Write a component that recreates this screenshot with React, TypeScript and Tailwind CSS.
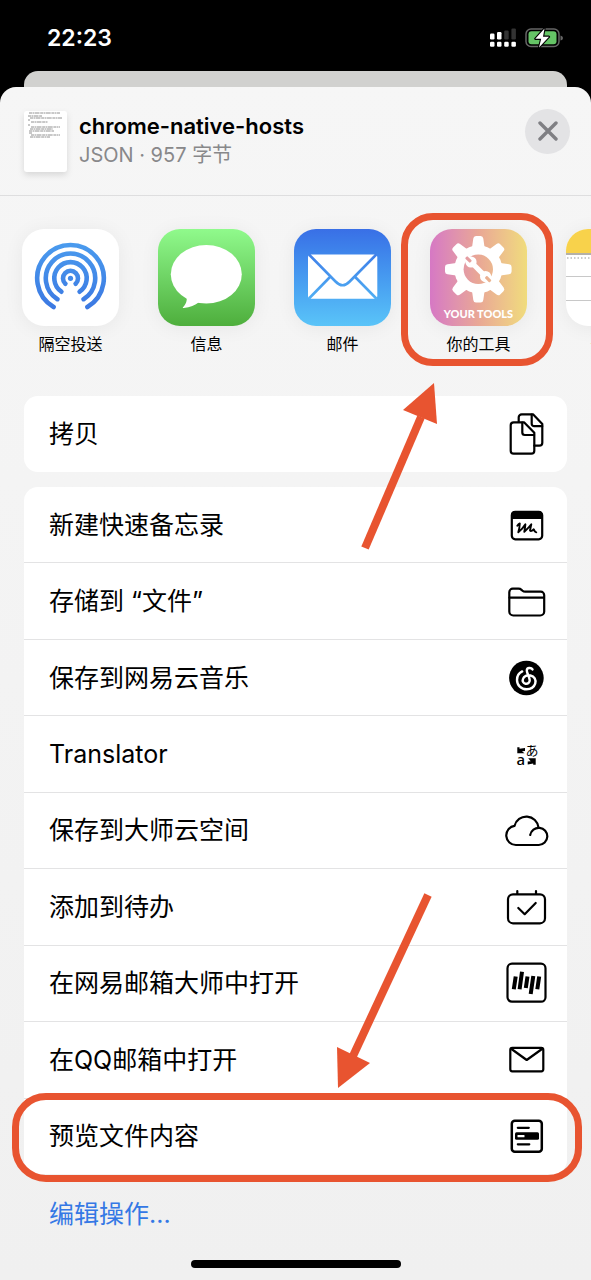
import type { ReactNode } from "react";

const line = {
  fill: "none",
  stroke: "#000",
  strokeWidth: 2.2,
  strokeLinecap: "round" as const,
  strokeLinejoin: "round" as const,
};

function Glyph({ children }: { children: ReactNode }) {
  return (
    <svg viewBox="0 0 48 48" className="size-12 shrink-0" aria-hidden="true">
      {children}
    </svg>
  );
}

const CopyIcon = () => (
  <Glyph>
    <g {...line}>
      <path d="M16.700 12V7.300a3 3 0 0 1 3-3H31l9.300 9.600v18.800a3 3 0 0 1-3 3h-5" />
      <path d="M29.700 4.500v9.200a2.500 2.500 0 0 0 2.500 2.500h8" />
      <path d="M11.700 12.300H22l10.300 10.500v17.900a3 3 0 0 1-3 3H11.700a3 3 0 0 1-3-3V15.300a3 3 0 0 1 3-3z" />
      <path d="M20.300 12.500v10a2.500 2.500 0 0 0 2.500 2.500h9.300" />
    </g>
  </Glyph>
);

const MemoIcon = () => (
  <Glyph>
    <rect x="9.800" y="10.800" width="30.400" height="27.500" rx="3.500" {...line} />
    <path d="M9 18v-4a4 4 0 0 1 4-4h23.500a4 4 0 0 1 4 4v4z" />
    <path
      d="M15.300 24.800Q16.500 23 17.800 22.500Q17.600 27 16.300 31.300Q20.500 28 23.400 23.300Q23 27 22.300 30.800Q26.500 27 29.300 23.300Q28.500 27 28 29.500Q29 31 31.800 28.300Q32.300 30.800 34.300 31.300"
      {...line}
      strokeWidth="1.900"
    />
  </Glyph>
);

const FolderIcon = () => (
  <Glyph>
    <g {...line}>
      <path d="M7.300 34.500V15.200a3.500 3.500 0 0 1 3.500-3.500h5.700c1.400 0 2.200.4 3 1.100l1 .9c.8.7 1.500 1 2.700 1h15.500a3.500 3.500 0 0 1 3.500 3.500v16.300a4 4 0 0 1-4 4H11.300a4 4 0 0 1-4-4z" />
      <path d="M7.500 20.700h34.500" />
    </g>
  </Glyph>
);

const MusicIcon = () => (
  <Glyph>
    <circle cx="24.400" cy="24" r="17.300" />
    <path
      d="M30.500 15.400c-1.200-2-5.700-2-5.700 1 0 2.700 2.900 6.700 2.900 9.800a3.500 3.500 0 1 1-6.700-1.300c.9-2.600 4.200-4.100 7.400-3.400 3.900.8 6 4.400 4.800 8.200-1.200 3.600-4.700 5.600-8.600 5.600-5.400 0-9.600-4.200-9.600-9.400 0-3.900 2.100-7 5.200-8.500"
      fill="none"
      stroke="#fff"
      strokeWidth="2.400"
      strokeLinecap="round"
    />
  </Glyph>
);

const TranslateIcon = () => (
  <Glyph>
    <path d="M15.300 17.300h2.200v1.500l5.500-.8v3l-3 .3 2.500 2h-7.200z" />
    <path d="M33.700 34.800h-2.500v-1.200l-5.500 1v-3l3-.3-2.500-3h7.500z" />
    <text x="14.500" y="35" fontSize="15" className="font-['Noto_Sans'] font-medium">a</text>
    <text x="23.500" y="25" fontSize="13" className="font-['Noto_Sans_CJK_JP']">あ</text>
  </Glyph>
);

const CloudIcon = () => (
  <Glyph>
    <path
      d="M36.500 21.500a12.200 12.200 0 0 0-24-1.600A9.600 9.600 0 0 0 14 39h22.800a8.600 8.600 0 1 0-8.600-10"
      {...line}
    />
  </Glyph>
);

const TodoIcon = () => (
  <Glyph>
    <g {...line}>
      <rect x="6" y="11.300" width="37" height="29" rx="5" />
      <path d="M15.300 8v3M34 8v3M16.300 25l6.400 6.200 11-11.200" />
    </g>
  </Glyph>
);

const MasterMailIcon = () => (
  <Glyph>
    <rect x="5.500" y="4.700" width="38" height="38" rx="4.500" {...line} />
    <path
      d="M13.700 17.500l-1.900 12.700M20 12.700l-2.400 17.500M25.500 17.500l-1.700 11.500M31.300 17l-2.600 18M37.200 17.500l-1.900 12.700"
      {...line}
      strokeWidth="4"
      strokeLinecap="butt"
    />
  </Glyph>
);

const MailIcon = () => (
  <Glyph>
    <g {...line}>
      <rect x="8.300" y="11.800" width="33" height="23.500" rx="2" />
      <path d="M9.500 13l15.200 11L40 13" />
    </g>
  </Glyph>
);

const PreviewIcon = () => (
  <Glyph>
    <rect x="9.800" y="8.800" width="30" height="31" rx="3" {...line} strokeWidth="2.500" />
    <path d="M15.800 15.800h11M15.800 32.300h11.500" {...line} />
    <rect x="13" y="20.300" width="24" height="7.500" rx="1.500" />
    <rect x="15.500" y="23" width="7" height="2.300" rx=".6" fill="#fff" />
  </Glyph>
);

const AirDrop = () => (
  <svg viewBox="0 0 97 97" className="size-full" aria-hidden="true">
    <defs>
      <linearGradient id="air" gradientUnits="userSpaceOnUse" x1="0" y1="14" x2="0" y2="80">
        <stop offset="0" stopColor="#4a9bee" />
        <stop offset="1" stopColor="#3b78e2" />
      </linearGradient>
    </defs>
    <g fill="none" stroke="url(#air)" strokeWidth="4.600" strokeLinecap="round">
      <path d="M31.600 78A33.300 33.300 0 1 1 65.400 78" />
      <path d="M35.400 70.200A24.700 24.700 0 1 1 61.600 70.200" />
      <path d="M39.400 62.700A16.200 16.200 0 1 1 57.600 62.700" />
      <path d="M43.400 54.800A7.500 7.500 0 1 1 53.600 54.800" />
    </g>
    <circle cx="48.500" cy="49.300" r="2.600" fill="#4289e8" />
  </svg>
);

const Messages = () => (
  <svg viewBox="0 0 97 97" className="size-full" aria-hidden="true">
    <g fill="#fff">
      <ellipse cx="48.300" cy="45.200" rx="35.500" ry="29.300" />
      <path d="M28.500 67c1 5-.8 8.500-3.500 11.300-.5.700 0 .9.800.8 6.500-.5 11-2.800 15.500-6z" />
    </g>
  </svg>
);

const Mail = () => (
  <svg viewBox="0 0 97 97" className="size-full" aria-hidden="true">
    <defs>
      <linearGradient id="fold" gradientUnits="userSpaceOnUse" x1="0" y1="25" x2="0" y2="70">
        <stop offset="0" stopColor="#3f7fe9" />
        <stop offset="1" stopColor="#50aff3" />
      </linearGradient>
    </defs>
    <rect x="14" y="25.500" width="69.300" height="44.300" rx="3" fill="#fff" />
    <g fill="none" stroke="url(#fold)" strokeWidth="2.600">
      <path d="M15 25.500L41.500 52.500Q48.600 60 55.700 52.500L82.300 25.500" />
      <path d="M36.500 47.500L15 69.500M60.700 47.500L82.300 69.500" />
    </g>
  </svg>
);

const Tools = () => (
  <span className="relative block size-full">
    <svg viewBox="0 0 97 97" className="size-full" aria-hidden="true">
      <defs>
        <mask id="gear">
          <g fill="#fff">
            <circle cx="48.300" cy="40.300" r="24" />
            {[0, 45, 90, 135, 180, 225, 270, 315].map((a) => (
              <path
                key={a}
                d="M41.800 20L43.300 9.500Q43.600 7 46 7h4.600q2.400 0 2.700 2.500L54.800 20z"
                transform={`rotate(${a} 48.300 40.300)`}
              />
            ))}
          </g>
          <circle cx="48.300" cy="40.300" r="14.700" fill="#000" />
          <g transform="rotate(-45 48.300 40.300)">
            <rect x="45.800" y="31" width="5" height="18.600" fill="#fff" />
            <circle cx="48.300" cy="30" r="5.600" fill="#fff" />
            <circle cx="48.300" cy="50.600" r="5.600" fill="#fff" />
            <rect x="46.700" y="23" width="3.200" height="6.800" rx="1" fill="#000" />
            <rect x="46.700" y="50.800" width="3.200" height="6.800" rx="1" fill="#000" />
          </g>
        </mask>
      </defs>
      <rect width="97" height="97" fill="#fff" mask="url(#gear)" />
    </svg>
    <span className="absolute inset-x-0 bottom-1 text-center font-[Lato] text-[11px] leading-4 font-black whitespace-nowrap text-white">
      YOUR TOOLS
    </span>
  </span>
);

const Notes = () => (
  <svg viewBox="0 0 97 97" className="size-full" aria-hidden="true">
    <rect width="97" height="24" fill="#f8d24b" />
    <rect y="24" width="97" height="2" fill="#b4b1a8" />
    <path d="M1 29H97" stroke="#bbb" strokeWidth="1.500" strokeDasharray="1.500 2" />
    <path d="M0 47.500H97M0 71.500H97" stroke="#c8c8c8" />
  </svg>
);

const apps = [
  { name: "隔空投送", tile: "bg-white", art: <AirDrop /> },
  { name: "信息", tile: "bg-linear-to-b from-[#90fa8c] to-[#4eae3c]", art: <Messages /> },
  { name: "邮件", tile: "bg-linear-to-b from-[#396fe6] to-[#5ac4f8]", art: <Mail /> },
  {
    name: "你的工具",
    tile: "bg-linear-to-r from-[#d678c4] via-[#e9a795] to-[#f0dc7c]",
    art: <Tools />,
    marked: true,
  },
  { name: "备忘录", tile: "bg-white", art: <Notes /> },
];

const actions = [
  { name: "新建快速备忘录", icon: <MemoIcon /> },
  { name: "存储到 “文件”", icon: <FolderIcon /> },
  { name: "保存到网易云音乐", icon: <MusicIcon /> },
  { name: "Translator", icon: <TranslateIcon /> },
  { name: "保存到大师云空间", icon: <CloudIcon /> },
  { name: "添加到待办", icon: <TodoIcon /> },
  { name: "在网易邮箱大师中打开", icon: <MasterMailIcon /> },
  { name: "在QQ邮箱中打开", icon: <MailIcon /> },
  { name: "预览文件内容", icon: <PreviewIcon />, marked: true },
];

function Action({ name, icon }: { name: string; icon: ReactNode }) {
  return (
    <button type="button" className="flex w-full flex-1 items-center justify-between pr-[17px] pl-[25px] text-left">
      <span className="text-[25px] leading-8">{name}</span>
      {icon}
    </button>
  );
}

export default function App() {
  return (
    <div className="flex min-h-screen flex-col overflow-hidden bg-black font-[Inter,'Noto_Sans_CJK_SC',sans-serif] text-black">
      <header className="flex h-[71px] items-center justify-between pt-1 pr-7 pl-[47px] text-white">
        <time className="text-[23px] leading-8 font-semibold">22:23</time>
        <svg viewBox="0 0 73 20" className="h-5 w-[73px]" role="img" aria-label="信号与电池">
          <g fill="#fff">
            <rect x="0" y="5.500" width="4.500" height="6" rx="1.200" />
            <rect x="7" y="4" width="4.500" height="7.500" rx="1.200" />
            <rect x="0" y="13.800" width="4.500" height="5" rx="1.200" />
            <rect x="7" y="13.800" width="4.500" height="5" rx="1.200" />
            <rect x="14.200" y="13.800" width="4.500" height="5" rx="1.200" />
            <rect x="21.400" y="13.800" width="4.500" height="5" rx="1.200" />
          </g>
          <g fill="#333">
            <rect x="14.200" y="2.500" width="4.500" height="9" rx="1.200" />
            <rect x="21.400" y="0.500" width="4.500" height="11" rx="1.200" />
          </g>
          <rect x="36" y="1" width="33" height="17.500" rx="5" fill="none" stroke="#666" strokeWidth="1.500" />
          <rect x="38.500" y="3.300" width="28" height="13" rx="3" fill="#65c466" />
          <path d="M70.500 7.500q2.500.5 2.500 2.500t-2.500 2.500z" fill="#666" />
          <path
            d="M54.500 .5L45.300 10.800h5.900L49 19.400 59 8.700h-6z"
            fill="#fff"
            stroke="#000"
            strokeWidth="2.200"
            strokeLinejoin="round"
            paintOrder="stroke"
          />
        </svg>
      </header>

      <div className="mx-6 h-8 rounded-t-[14px] bg-[#d1d1cf]" />

      <main className="relative -mt-4 flex flex-1 flex-col rounded-t-[16px] bg-linear-to-b from-[#f6f6f6] to-[#f0f0f0]">
        <section className="flex h-[109px] items-center border-b border-[#dededf] pr-[21px] pl-6">
          <svg viewBox="0 0 43 61" className="h-[61px] w-[43px] shrink-0 drop-shadow-md" aria-hidden="true">
            <rect width="43" height="61" rx="3" fill="#fff" />
            <path
              d="M5 2H36M4 5H18M6 7H38M4 9H6M7 11H24M4 14H6M7 16H36M6 18H29M5 20H30M5 22H8M7 24H36M6 26H26"
              stroke="#777"
              strokeDasharray="3 .5 1.500 .5 5 .7"
              strokeWidth=".8"
            />
          </svg>
          <div className="mb-1 ml-3 flex-1">
            <h1 className="text-[22px] leading-8 font-semibold">chrome-native-hosts</h1>
            <p className="text-[20px] leading-[26px] text-[#88888a]">JSON · 957 字节</p>
          </div>
          <button
            type="button"
            aria-label="关闭"
            className="mb-5 flex size-[45px] items-center justify-center rounded-full bg-[#e3e3e5]"
          >
            <svg viewBox="0 0 20 20" className="size-5" aria-hidden="true">
              <path d="M2 2l16 16M18 2L2 18" stroke="#7f7f83" strokeWidth="3.400" strokeLinecap="round" />
            </svg>
          </button>
        </section>

        <ul className="flex gap-[39px] overflow-hidden pt-[33px] pb-[38px] pl-[22px]">
          {apps.map((app) => (
            <li key={app.name} className="relative w-[97px] shrink-0">
              <button type="button" className="block w-full text-center">
                <span
                  className={`block size-[97px] overflow-hidden rounded-[22px] shadow-[0_2px_20px_rgba(0,0,0,0.06)] ${app.tile}`}
                >
                  {app.art}
                </span>
                <span className="mt-1 block text-[16px] leading-7">{app.name}</span>
              </button>
              {app.marked && (
                <span className="pointer-events-none absolute -top-4 -right-[26px] -bottom-2 -left-[29px] rounded-[32px] border-[7px] border-[#e85430]" />
              )}
            </li>
          ))}
        </ul>

        <div className="relative mx-6 flex min-h-[76px] rounded-[14px] bg-white">
          <Action name="拷贝" icon={<CopyIcon />} />
          <svg
            viewBox="0 0 75 167"
            className="pointer-events-none absolute -top-[13px] right-[129px] z-10 h-[167px] w-[75px] overflow-visible"
            aria-hidden="true"
          >
            <path d="M2 165L58 34" stroke="#e85430" strokeWidth="8" />
            <path d="M71 0L40 27L74 41z" fill="#e85430" />
          </svg>
        </div>

        <ul className="mx-6 mt-[15px] flex flex-1 flex-col divide-y divide-[#e3e3e4] rounded-[14px] bg-white">
          {actions.map((action) => (
            <li key={action.name} className="relative flex min-h-[75px] flex-1">
              <Action name={action.name} icon={action.icon} />
              {action.marked && (
                <>
                  <span className="pointer-events-none absolute -top-1.5 -right-[15px] -bottom-2 -left-3 rounded-[34px] border-[7px] border-[#e85430]" />
                  <svg
                    viewBox="0 0 98 196"
                    className="pointer-events-none absolute right-[133px] bottom-[86px] h-[196px] w-[98px] overflow-visible"
                    aria-hidden="true"
                  >
                    <path d="M92 3L17 164" stroke="#e85430" strokeWidth="8" />
                    <path d="M2 196L1 155L34 171z" fill="#e85430" />
                  </svg>
                </>
              )}
            </li>
          ))}
        </ul>

        <a href="#edit" className="mt-6 self-start pl-[49px] text-[25px] leading-8 text-[#3478e5]">
          编辑操作...
        </a>
        <div className="mx-auto mt-[30px] mb-3 h-2 w-[210px] rounded-full bg-black" />
      </main>
    </div>
  );
}
